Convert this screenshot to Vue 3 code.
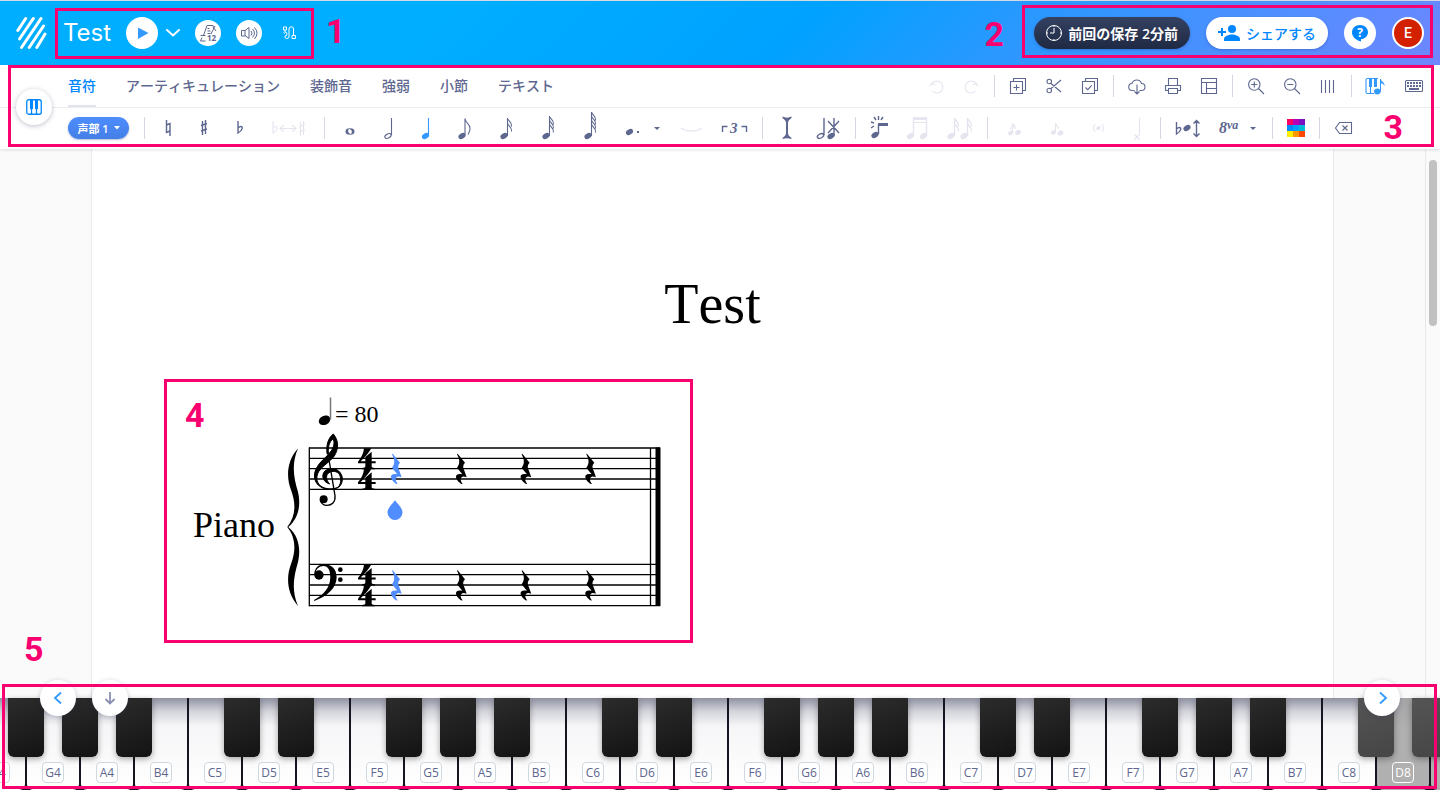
<script setup>
const head = (x, y, rx = 3.8, ry = 2.7) => {
  const dx = (rx * 0.87).toFixed(2)
  const dy = (rx * 0.5).toFixed(2)
  return `M${x - dx} ${y + +dy}A${rx} ${ry} -30 1 0 ${x + +dx} ${y - dy}A${rx} ${ry} -30 1 0 ${x - dx} ${y + +dy}Z`
}
const stem = (x, top, bottom = 24) => `M${x} ${top}V${bottom}`
const flag = (x, y) => `M${x} ${y}c.5 3 4.500 3.500 4 8.500`
const flat = (x, y) => `M${x} ${y}v12c5-3 5-6.500 3-6.500-1 0-2 .5-3 1.500`
const sharp = (x, y) => `M${x + 1.500} ${y + 1}v14M${x + 4.500} ${y}v14M${x} ${y + 5.500}l6-2M${x} ${y + 11}l6-2`

const tabs = ['音符', 'アーティキュレーション', '装飾音', '強弱', '小節', 'テキスト']

const tools = [
  [
    { label: '元に戻す', off: true, s: 'M4 9l2-3 3 2M5.500 7.500a6 6 0 1 1 1 6.500' },
    { label: 'やり直す', off: true, s: 'M16 9l-2-3-3 2M14.500 7.500a6 6 0 1 0-1 6.500' }
  ],
  [
    { label: 'コピー', s: 'M1.500 4.500h12v12h-12zM4.500 4.500v-3h12v12h-3M7.500 7.500v6M4.500 10.500h6' },
    { label: '切り取り', s: 'M6 6.500l10 8.500M6 11.500l10-8.500M6.500 4.500a2.200 2.200 0 1 1-4.500 0a2.200 2.200 0 1 1 4.500 0zM6.500 13.500a2.200 2.200 0 1 1-4.500 0a2.200 2.200 0 1 1 4.500 0z' },
    { label: '選択', s: 'M1.500 4.500h12v12h-12zM4.500 4.500v-3h12v12h-3M4.500 10.500l2.200 2.200 4-4.400' }
  ],
  [
    { label: 'ダウンロード', s: 'M6.500 13.500h-2a3.500 3.500 0 0 1-.5-7a5 5 0 0 1 9.500 0a3.500 3.500 0 0 1 0 7h-2M9 7.500v9M6.500 14.500l2.500 2.500 2.500-2.500' },
    { label: '印刷', s: 'M4.500 8.500v-7h9v7M4.500 13.500h-3v-5h15v5h-3M4.500 11.500h9v5h-9z' },
    { label: 'レイアウト', s: 'M1.500 1.500h15v15h-15zM1.500 5.500h15M6.500 5.500v11M6.500 11.500h10' }
  ],
  [
    { label: '拡大', s: 'M13 7.500a5.700 5.700 0 1 1-11.400 0a5.700 5.700 0 1 1 11.400 0zM11.500 11.500l5.500 5.500M7.300 4.500v6M4.300 7.500h6' },
    { label: '縮小', s: 'M13 7.500a5.700 5.700 0 1 1-11.400 0a5.700 5.700 0 1 1 11.400 0zM11.500 11.500l5.500 5.500M4.300 7.500h6' },
    { label: '小節線', s: 'M2.500 3v13M6.500 3v13M10.500 3v13M14.500 3v13' }
  ]
]

const noteGroups = [
  [
    { label: 'ナチュラル', w: 36, s: 'M16.500 8v12.500l3.500-1.500M20 24v-12.500l-3.500 1.500', bold: true },
    { label: 'シャープ', w: 36, s: sharp(15, 8), bold: true },
    { label: 'フラット', w: 36, s: flat(16, 9), bold: true },
    { label: '異名同音', w: 61, off: true, s: flat(15, 9) + sharp(41, 9) + 'M22 16.500h16M26 13l-4 3.500 4 3.500M34 13l4 3.500-4 3.500' }
  ],
  [
    { label: '全音符', w: 38, ring: 'M15.500 19.500a4.500 3.200 0 1 0 9 0a4.500 3.200 0 1 0-9 0zM18.200 18.500a1.700 2.300 -20 1 1 3.600 2a1.700 2.300 -20 1 1-3.600-2z' },
    { label: '2分音符', w: 38, s: head(20, 24, 3.4, 2) + stem(23.5, 6, 23) },
    { label: '4分音符', w: 38, on: true, f: head(19.5, 24), s: stem(22.5, 6, 23) },
    { label: '8分音符', w: 38, f: head(18, 24), s: stem(21, 6.5, 23) + 'M21 6.500c.5 5 5 5 5 10 0 3-1 4-2 6' },
    { label: '16分音符', w: 42, f: head(22, 24), s: stem(25.5, 6) + flag(25.5, 6) + flag(25.5, 11) },
    { label: '32分音符', w: 42, f: head(22, 24), s: stem(25.5, 4) + flag(25.5, 4) + flag(25.5, 8) + flag(25.5, 12) },
    { label: '64分音符', w: 42, f: head(22, 24), s: stem(25.5, 0) + flag(25.5, 0) + flag(25.5, 4) + flag(25.5, 8) + flag(25.5, 12) },
    { label: '付点', w: 60, f: head(21.5, 20) + 'M29 19h2v2h-2zM46 15h6l-3 3z' },
    { label: 'タイ', w: 46, off: true, s: 'M13 16c5 4 16 4 21 0' },
    { label: '連符', w: 43, text: '3', s: 'M8.500 20v-5.500h5M27.500 14.500h5v5.500', bold: true }
  ],
  [
    { label: '挿入', w: 38, f: 'M14.500 4.500c3 1.500 6 1.500 9 0v1.500c-2 1.500-3.500 3-3.500 5v10c0 2 1.500 3.500 3.500 5v1c-3-1-6-1-9 0v-1c2-1.500 3.500-3 3.500-5v-10c0-2-1.500-3.500-3.500-5z' },
    { label: '音符を置換', w: 44, bold: true, f: head(25, 24), s: head(14.5, 24, 3.4, 2) + stem(18, 6, 23) + 'M28 6v18M22 9l11 12M33 9l-11 12' }
  ],
  [
    { label: '連桁', w: 36, bold: true, f: head(14, 23) + 'M17 11h10v3h-10z', s: stem(17.5, 12, 22) + 'M17.500 4v4M13 5l2 3M22 5l-2 3M10 10l3 1M10 16l3-2' },
    { label: '連桁をつなぐ', w: 42, off: true, bold: true, f: head(13.5, 24) + head(26.5, 24) + 'M16 5h14v3h-14zM16 10h14v1h-14z', s: stem(16.5, 6) + stem(29.5, 6) },
    { label: '連桁を切る', w: 43, off: true, bold: true, f: head(12, 24) + head(25, 24), s: stem(15.5, 6) + flag(15.5, 6) + flag(15.5, 11) + stem(28.5, 6) + flag(28.5, 6) + flag(28.5, 11) }
  ],
  [
    { label: '短前打音', w: 42, off: true, f: head(17.5, 21, 2.5, 2) + head(25, 20.5, 3, 2.3), s: stem(19.5, 11, 20) + 'M19.500 11c0 3 3 3 3 6M17 17l5-4' },
    { label: '前打音', w: 42, off: true, f: head(18.5, 20.5, 2.5, 2) + head(25.5, 21, 3, 2.3), s: stem(20.5, 11, 20) + 'M20.500 11c0 3 3 3 3 6' },
    { label: 'ゴースト音', w: 42, off: true, f: head(21.5, 16, 2.3, 1.8), s: 'M18 12q-3 4 0 8M25 12q3 4 0 8' },
    { label: '符頭', w: 36, off: true, s: 'M20.500 6v17M15.500 22.500l5 5M20.500 22.500l-5 5' }
  ],
  [
    { label: '移調', w: 44, bold: true, f: head(21, 16), s: flat(10.5, 10) + 'M30.500 8.500v16M27.500 11.500l3-3 3 3M27.500 21.500l3 3 3-3' },
    { label: 'オクターブ', w: 57, text: '8', sup: 'va', f: 'M40 15h6l-3 3z' }
  ],
  [{ label: '色', w: 36, colors: true }],
  [{ label: '削除', w: 36, s: 'M10.500 16l4-5.500h12v11h-12zM17.500 13.500l5 5M22.500 13.500l-5 5' }]
]
const swatches = ['#ff0060', '#b800b8', '#7a12c4', '#008cff', '#00a2ff', '#00bcd4', '#ffee00', '#ff9800', '#ff4800']

const scale = ['C', 'D', 'E', 'F', 'G', 'A', 'B']
const keys = Array.from({ length: 28 }, (_, n) => {
  const step = n + 3
  const letter = scale[step % 7]
  return {
    name: letter + (4 + Math.floor(step / 7)),
    labelled: n < 27,
    black: letter !== 'E' && letter !== 'B',
    out: n > 25,
    blackOut: n > 24
  }
})

const topStaff = [448, 458.3, 468.6, 479, 489.3]
const bottomStaff = [564.3, 574.6, 585, 595.3, 605.6]
const restX = [391, 456, 520.6, 585.3]
const restY = [453.7, 570.2]
const fours = [448.3, 469, 564.6, 585.3]
</script>

<template>
  <div class="app">
    <header class="top">
      <svg class="logo" width="32" height="34" viewBox="0 0 32 34" aria-hidden="true">
        <path d="M9.700 2.500L1.800 14.500M17.300 2.500L3.500 23M25 2.500L5.500 31.500M27.500 10L13.200 31.500M29 18L20.800 31.500" />
      </svg>
      <span class="doc">Test</span>
      <button class="round play" aria-label="再生">
        <svg width="32" height="32" viewBox="0 0 32 32"><path d="M12 10.500l10.500 5.500-10.500 6z" fill="#3399ff" /></svg>
      </button>
      <button class="bare" aria-label="再生オプション">
        <svg width="14" height="8" viewBox="0 0 14 8"><path d="M1 1l6 5.500L13 1" class="wl" /></svg>
      </button>
      <button class="round small metro" aria-label="メトロノーム">
        <svg width="26" height="26" viewBox="0 0 26 26">
          <path d="M8.500 15.500l3.500-10h6l.5 2M5.500 15.500h5M7 17.500l-1.500 3.500h5M12.500 8.500h2M12.500 11h3M12.500 13.500h3M20 6l-4 8M18 7l3 4" />
          <text x="12" y="21">12</text>
        </svg>
      </button>
      <button class="round small speaker" aria-label="音量">
        <svg width="26" height="26" viewBox="0 0 26 26">
          <path d="M5.500 10.500h3.500v5.500h-3.500zM9 10.500l4-3v11l-4-3M15 11q2 2 0 4.500M16.500 9q4 4 0 8.500M18.500 7.500q5 5.500 0 11.500" />
        </svg>
      </button>
      <button class="bare cable" aria-label="MIDI">
        <svg width="16" height="16" viewBox="0 0 16 16">
          <path d="M1.500 2h3v3h-3zM3 5v2a2 2 0 0 1 0 4 2 2 0 0 0 4 1V4a2.200 2.200 0 0 1 4.500 0v6M10 10.500h3.500v3h-3.500zM1.500 7.500l1.500 1" />
        </svg>
      </button>
      <div class="account">
        <button class="pill saved">
          <svg width="18" height="18" viewBox="0 0 18 18"><circle cx="9" cy="9" r="7.500" /><path d="M9 4v5H5M9 1.500v1.500M9 15v1.500M15 9h1.500M1.500 9H3" /></svg>
          <span>前回の保存 2分前</span>
        </button>
        <button class="pill share">
          <svg width="24" height="18" viewBox="0 0 24 18">
            <path d="M4 4h2v3h3v2H6v3H4V9H1V7h3z" /><circle cx="15" cy="5" r="4" /><path d="M7 17v-2c0-3 5-4.500 8-4.500s8 1.500 8 4.500v2z" />
          </svg>
          <span>シェアする</span>
        </button>
        <button class="round help" aria-label="ヘルプ">
          <svg width="18" height="18" viewBox="0 0 18 18"><path d="M9 1c4.500 0 8 3.200 8 7.200 0 3.600-3 6.500-7 7V17.500C6 16.500 1 13.500 1 8.200 1 4.200 4.500 1 9 1z" fill="#0086ff" /></svg>
          <b>?</b>
        </button>
        <button class="avatar">E</button>
      </div>
    </header>

    <section class="toolbar">
      <button class="instrument" aria-label="ピアノ">
        <svg width="16" height="16" viewBox="0 0 16 16"><rect x=".75" y=".75" width="14.500" height="14.500" rx="2" /><path d="M5.500 9v6M10.500 9v6" /><path class="solid" d="M4 1h3v9H4zM9 1h3v9H9z" /></svg>
      </button>
      <div class="row tabs">
        <nav>
          <button v-for="(t, i) in tabs" :key="t" :class="['tab', { current: i === 0 }]">{{ t }}</button>
        </nav>
        <div class="tools">
          <template v-for="(group, g) in tools" :key="g">
            <button v-for="t in group" :key="t.label" :class="['tool', { off: t.off }]" :aria-label="t.label">
              <svg width="18" height="18" viewBox="0 0 18 18"><path class="line" :d="t.s" /></svg>
            </button>
            <i class="sep"></i>
          </template>
          <button class="tool on" aria-label="ピアノ入力">
            <svg width="20" height="18" viewBox="0 0 20 18">
              <path class="line" d="M9 16.500H2.500q-1.500 0-1.500-1.500V3q0-1.500 1.500-1.500H13M5.500 9v7" />
              <path class="fill" d="M4 1h3v9H4zM9 1h3v9H9zM15 2h1c0 3 4 3 3.500 7-1-2-2-2.500-3.500-2.500v7c0 5-7 5-7 1 0-3 4-4 6-2z" />
            </svg>
          </button>
          <button class="tool wide" aria-label="キーボード入力">
            <svg width="20" height="18" viewBox="0 0 20 18">
              <rect class="line" x="1.500" y="3.500" width="17" height="11" rx="1" />
              <path class="fill" d="M3 5h2v2H3zM6 5h2v2H6zM9 5h2v2H9zM12 5h2v2h-2zM15 5h2v2h-2zM3 8h2v2H3zM6 8h2v2H6zM9 8h2v2H9zM12 8h2v2h-2zM15 8h2v2h-2zM5 11h10v2H5z" />
            </svg>
          </button>
        </div>
      </div>
      <div class="row notes">
        <button class="voice">声部 1 <svg width="6" height="4" viewBox="0 0 6 4"><path d="M0 0h6L3 3.500z" fill="#fff" /></svg></button>
        <template v-for="(group, g) in noteGroups" :key="g">
          <i class="sep"></i>
          <button v-for="t in group" :key="t.label" :class="['note', { off: t.off, on: t.on }]" :aria-label="t.label">
            <svg :width="t.w" height="32" :viewBox="`0 0 ${t.w} 32`">
              <path v-if="t.ring" class="fill" fill-rule="evenodd" :d="t.ring" />
              <path v-if="t.f" class="fill" :d="t.f" />
              <path v-if="t.s" :class="['line', { bold: t.bold }]" :d="t.s" />
              <template v-if="t.colors">
                <rect v-for="(c, i) in swatches" :key="c" :x="9 + (i % 3) * 6" :y="7 + Math.floor(i / 3) * 6" width="6" height="6" :fill="c" />
              </template>
              <text v-if="t.text && !t.sup" x="16" y="21" class="tuplet">{{ t.text }}</text>
              <text v-if="t.sup" x="9" y="21" class="octave">{{ t.text }}<tspan class="sup" dy="-4">{{ t.sup }}</tspan></text>
            </svg>
          </button>
        </template>
      </div>
    </section>

    <main class="canvas">
      <article class="page">
        <h1>Test</h1>
        <svg class="score" width="540" height="230" viewBox="160 390 540 230">
          <ellipse cx="324.500" cy="420.300" rx="6" ry="4.500" transform="rotate(-25 324.500 420.300)" />
          <path d="M330.500 397.500v22" stroke="#777" stroke-width="1.500" />
          <text x="335" y="422" class="tempo">= 80</text>
          <text x="193" y="537" class="part">Piano</text>
          <path d="M298 448.300C286 462 286.500 478 291 490C296 503 296 516 287.300 527C296 538 296 551 291 564C286.500 576 286 592 298 606C291 589 294 576 298 562C300.500 551 300 537 288.300 527C300 517 300.500 503 298 492C294 478 291 465 298 448.300Z" />
          <g stroke="#000" stroke-width="1.300">
            <path v-for="y in [...topStaff, ...bottomStaff]" :key="y" :d="`M309 ${y}H660`" />
            <path d="M309.300 447.500V606.200M650.500 448V606" />
          </g>
          <path d="M655.500 447.500h5v158.500h-5z" />
          <g transform="translate(160 375) scale(.3333)">
            <path stroke="#000" stroke-width="3" d="M520 177C537 197 536 222 523 243C509 262 487 272 476 290C466 307 470 327 487 336C500 343 520 344 533 337C543 331 545 310 538 298C532 288 517 287 507 293C497 299 497 314 509 327C492 322 484 307 491 293C499 279 523 276 536 288C551 300 551 325 536 337C520 346 495 345 481 335C462 323 459 300 469 280C480 258 500 248 515 226C523 212 524 200 519 192C508 200 504 215 505 235L501 236C498 210 505 188 520 177Z" />
            <path d="M503 230L525 362C527 382 515 391 501 391C491 391 484 386 481 376" fill="none" stroke="#000" stroke-width="4" />
            <circle cx="491" cy="373" r="12" />
            <path d="M463 598C463 580 475 568 493 568C515 568 530 583 530 607C530 640 500 665 463 678L462 675C490 660 510 640 511 607C511 585 504 573 491 573C478 573 468 582 467 595Z" />
            <circle cx="477" cy="600" r="14" />
            <circle cx="541" cy="584" r="7" />
            <circle cx="541" cy="614" r="7" />
          </g>
          <path v-for="y in fours" :key="y" :transform="`translate(358 ${y}) scale(.3333)`" d="M18 0H40C32 14 20 28 8 39H22V26L41 10V39H53V45H41V54C41 58 43 59 51 59V63H12V59C19 59 22 58 22 54V45H0V40C10 28 17 14 18 0Z" />
          <template v-for="y in restY" :key="y">
            <path v-for="(x, i) in restX" :key="x" :class="{ cursor: i === 0 }" :transform="`translate(${x} ${y}) scale(.3333)`" d="M5 0L27 27C20 34 20 42 25 51L32 71C22 66 16 68 14 76C14 82 16 86 20 90L17 91C8 86 0 76 0 69C0 62 8 59 19 62L3 42C11 33 13 20 3 2Z" />
          </template>
          <path class="cursor" d="M395 500.300C398 504.500 402.500 508 402.500 512.500A7.500 7.500 0 0 1 387.500 512.500C387.500 508 392 504.500 395 500.300Z" />
        </svg>
      </article>
      <div class="track"><div class="thumb"></div></div>
    </main>

    <footer class="piano">
      <div class="keys">
        <div v-for="k in keys" :key="k.name" :class="['key', { out: k.out }]">
          <span v-if="k.labelled" class="name">{{ k.name }}</span>
          <i v-if="k.black" :class="['black', { dim: k.blackOut }]"></i>
        </div>
      </div>
      <button class="float prev" aria-label="低い音へ"><svg width="16" height="16" viewBox="0 0 16 16"><path d="M11 2.500L5 8l6 5.500" stroke="#3399ff" /></svg></button>
      <button class="float fold" aria-label="閉じる"><svg width="16" height="16" viewBox="0 0 16 16"><path d="M8 2v11.500M3.500 9L8 13.500 12.500 9" stroke="#8a90b2" /></svg></button>
      <button class="float next" aria-label="高い音へ"><svg width="16" height="16" viewBox="0 0 16 16"><path d="M6 2.500L12 8l-6 5.500" stroke="#3399ff" /></svg></button>
    </footer>

    <div class="frame f1"></div>
    <div class="frame f2"></div>
    <div class="frame f3"></div>
    <div class="frame f4"></div>
    <div class="frame f5"></div>
    <b class="num n1">1</b>
    <b class="num n2">2</b>
    <b class="num n3">3</b>
    <b class="num n4">4</b>
    <b class="num n5">5</b>
  </div>
</template>

<style>
body {
  margin: 0;
}
</style>

<style scoped>
.app {
  position: relative;
  display: flex;
  flex-direction: column;
  height: 100vh;
  overflow: hidden;
  font-family: "Open Sans", "Noto Sans CJK JP", sans-serif;
  color: #5d678f;
}
button {
  display: flex;
  align-items: center;
  justify-content: center;
  flex: none;
  margin: 0;
  padding: 0;
  border: 0;
  background: none;
  color: inherit;
  font: inherit;
}
svg {
  display: block;
  flex: none;
}
.top {
  display: flex;
  align-items: center;
  flex: none;
  box-sizing: border-box;
  height: 65px;
  padding: 0 16px;
  border-top: 1px solid #d5dade;
  background: linear-gradient(135deg, #00aeff 30%, #00a2ff 55%, #2b98ff 70%, #7086ff 100%);
}
.logo path {
  fill: none;
  stroke: #fff;
  stroke-width: 3;
  stroke-linecap: round;
}
.doc {
  margin: 0 15px;
  color: #fff;
  font: 24px/32px Inter, sans-serif;
}
.round {
  width: 32px;
  height: 32px;
  border-radius: 50%;
  background: #fff;
}
.bare {
  margin: 0 8px;
}
.wl {
  fill: none;
  stroke: #fff;
  stroke-width: 2;
  stroke-linecap: round;
}
.small {
  width: 26px;
  height: 26px;
}
.metro {
  margin: 0 15px 0 7px;
}
.small path {
  fill: none;
  stroke: #5d678f;
}
.small text {
  font: bold 8px "Open Sans", sans-serif;
  fill: #5d678f;
}
.cable {
  margin: 0 0 0 20px;
}
.cable path {
  fill: none;
  stroke: #fff;
}
.account {
  display: flex;
  gap: 16px;
  margin-left: auto;
}
.pill {
  gap: 5px;
  height: 32px;
  padding: 0 12px 0 11px;
  border-radius: 16px;
  font-size: 14px;
  font-weight: 600;
  white-space: nowrap;
  box-shadow: 0 1px 3px rgba(20, 40, 120, 0.3);
}
.saved {
  background: linear-gradient(#344161, #1f2943);
  color: #fff;
}
.saved svg {
  fill: none;
  stroke: #fff;
}
.share {
  background: #fff;
  color: #0086ff;
  font-weight: 500;
}
.share svg {
  fill: #0086ff;
}
.help {
  position: relative;
}
.help b {
  position: absolute;
  color: #fff;
  font-size: 12px;
  line-height: 16px;
}
.avatar {
  box-sizing: border-box;
  width: 32px;
  height: 32px;
  border: 2px solid #fff;
  border-radius: 50%;
  background: #d32100;
  color: #fff;
  font: 500 14px Roboto, sans-serif;
}
.toolbar {
  position: relative;
  z-index: 1;
  flex: none;
  background: #fff;
  box-shadow: 0 1px 3px rgba(40, 50, 90, 0.14);
}
.row {
  display: flex;
  align-items: center;
  padding-left: 68px;
}
.tabs {
  justify-content: space-between;
  height: 42px;
  padding-right: 6px;
  border-bottom: 1px solid #ededf1;
}
.tabs nav {
  display: flex;
  gap: 30px;
}
.tab {
  box-sizing: border-box;
  height: 42px;
  border-bottom: 2px solid transparent;
  font-size: 14px;
  font-weight: 500;
  font-kerning: none;
  white-space: nowrap;
}
.tab.current {
  border-color: #e1e3ed;
  color: #0086ff;
}
.tools {
  display: flex;
  align-items: center;
}
.tool {
  width: 36px;
  height: 32px;
}
.tool.wide {
  width: 41px;
}
.sep {
  flex: none;
  width: 1px;
  height: 22px;
  margin: 0 5px;
  background: #d4d6e2;
}
.notes {
  height: 40px;
  padding-bottom: 1px;
}
.line {
  fill: none;
  stroke: currentColor;
  stroke-width: 1.1;
}
.bold {
  stroke-width: 1.4;
}
.fill {
  fill: currentColor;
}
.off {
  color: #e4e5ee;
}
.on {
  color: #3399ff;
}
.voice {
  gap: 5px;
  width: 61px;
  height: 22px;
  margin-right: 10px;
  border-radius: 11px;
  background: linear-gradient(#4d8dff, #447fe6);
  box-shadow: 0 1px 2px rgba(40, 70, 150, 0.35);
  color: #fff;
  font-size: 11px;
  font-weight: 600;
}
.tuplet {
  font: italic bold 15px "Liberation Serif", serif;
  fill: #5d678f;
}
.octave {
  font: italic bold 16px "Liberation Serif", serif;
  fill: #5d678f;
}
.sup {
  font-size: 12px;
}
.instrument {
  position: absolute;
  top: 24px;
  left: 16px;
  width: 36px;
  height: 36px;
  border-radius: 50%;
  background: #fff;
  box-shadow: 0 1px 5px rgba(40, 50, 90, 0.3);
}
.instrument svg {
  fill: none;
  stroke: #0086ff;
  stroke-width: 1.3;
}
.instrument .solid {
  fill: #0086ff;
  stroke: none;
}
.canvas {
  position: relative;
  flex: 1;
  min-height: 0;
  overflow: hidden;
  padding: 0 106px 0 91px;
  background: #fafafa;
}
.page {
  height: 100%;
  border: solid #e9e9ec;
  border-width: 0 1px;
  background: #fff;
  color: #000;
}
h1 {
  margin: 0 0 54px;
  padding-top: 123px;
  font: 56px/64px "Liberation Serif", serif;
  font-kerning: none;
  text-align: center;
}
.score {
  margin-left: 68px;
}
.tempo {
  font: 24px "Liberation Serif", serif;
}
.part {
  font: 36px "Liberation Serif", serif;
}
.cursor {
  fill: #508dff;
}
.track {
  position: absolute;
  top: 0;
  right: 0;
  bottom: 0;
  width: 14px;
  border-left: 1px solid #e8e8e8;
}
.thumb {
  width: 8px;
  height: 166px;
  margin: 11px 3px;
  border-radius: 4px;
  background: #c1c1c1;
}
.piano {
  position: relative;
  flex: none;
  height: 92px;
}
.keys {
  display: flex;
  height: 100%;
  margin-left: -27px;
  background: #151522;
}
.key {
  position: relative;
  display: flex;
  align-items: flex-end;
  justify-content: center;
  flex: none;
  box-sizing: border-box;
  width: 52px;
  margin-right: 2px;
  padding-bottom: 7px;
  border-radius: 0 0 6px 6px;
  background: linear-gradient(#9092a2, #d2d3da 13px, #f6f6f8 28px, #fff);
}
.key.out {
  background: linear-gradient(#a5a5a8, #b0b0b0 30px);
}
.name {
  box-sizing: border-box;
  min-width: 22px;
  height: 21px;
  border: 1px solid #cfd8df;
  border-radius: 4px;
  background: #fff;
  font-size: 12px;
  line-height: 19px;
  text-align: center;
}
.out .name {
  border-color: #fff;
  background: none;
  color: #fff;
}
.black {
  position: absolute;
  z-index: 1;
  top: 0;
  right: -19px;
  width: 36px;
  height: 59px;
  border-radius: 0 0 6px 6px;
  background: linear-gradient(160deg, #2c2c2c, #131313);
  box-shadow: 0 2px 6px rgba(0, 0, 0, 0.35);
}
.black.dim {
  background: linear-gradient(160deg, #555, #454545);
}
.float {
  position: absolute;
  z-index: 2;
  top: -18px;
  width: 36px;
  height: 36px;
  border-radius: 50%;
  background: #fff;
  box-shadow: 0 1px 5px rgba(40, 50, 90, 0.25);
}
.float path {
  fill: none;
  stroke-width: 1.8;
}
.prev {
  left: 40px;
}
.fold {
  left: 92px;
}
.next {
  right: 40px;
}
.frame {
  position: absolute;
  z-index: 5;
  box-sizing: border-box;
  border: 3px solid #f90070;
  pointer-events: none;
}
.f1 {
  top: 8px;
  left: 55px;
  width: 259px;
  height: 51px;
}
.f2 {
  top: 5px;
  right: 7px;
  width: 411px;
  height: 53px;
}
.f3 {
  top: 65px;
  right: 6px;
  left: 8px;
  height: 82px;
}
.f4 {
  top: 379px;
  left: 164px;
  width: 529px;
  height: 264px;
}
.f5 {
  right: 3px;
  bottom: 1px;
  left: 2px;
  height: 105px;
}
.num {
  position: absolute;
  z-index: 5;
  color: #f90070;
  font: bold 34px/34px Roboto, sans-serif;
}
.n1 {
  top: 14px;
  left: 326px;
}
.n2 {
  top: 17px;
  right: 436px;
}
.n3 {
  top: 110px;
  right: 37px;
}
.n4 {
  top: 398px;
  left: 185px;
}
.n5 {
  bottom: 124px;
  left: 24px;
}
</style>
